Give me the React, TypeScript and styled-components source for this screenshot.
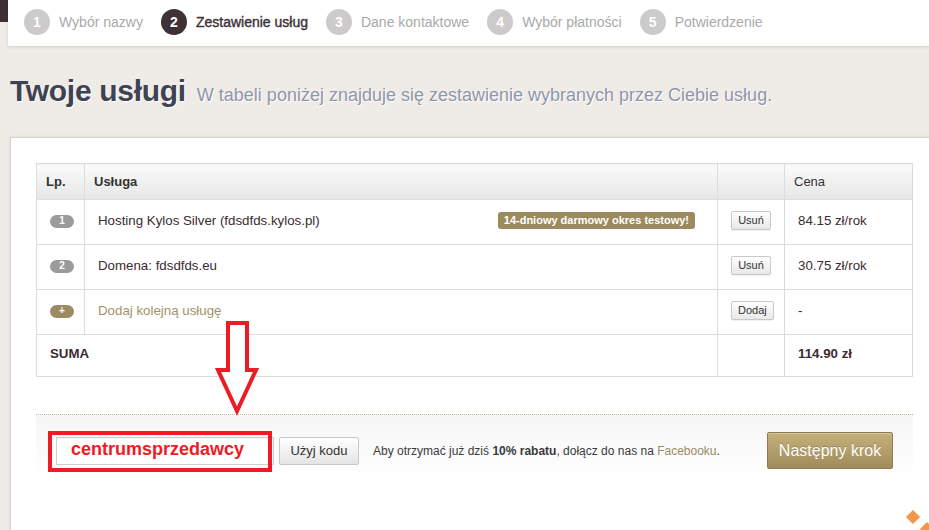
import React from 'react';
import styled, { createGlobalStyle } from 'styled-components';

const GlobalStyle = createGlobalStyle`
  html, body {
    margin: 0;
    padding: 0;
    background: #efebe6;
    overflow: hidden;
    font-family: 'Liberation Sans', Arial, sans-serif;
  }
`;

const Page = styled.div`
  display: flex;
  flex-direction: column;
  min-height: 530px;
  position: relative;
`;

const TopRow = styled.div`
  display: flex;
  align-items: flex-start;
`;

const Strip = styled.div`
  width: 8px;
  height: 22px;
  background: #3f2f37;
`;

const StepBar = styled.div`
  flex: 1;
  height: 46px;
  box-sizing: border-box;
  padding: 0 16px 2px;
  background: #fff;
  display: flex;
  align-items: center;
  gap: 18px;
  box-shadow: 0 1px 3px rgba(0, 0, 0, 0.12);
`;

const Step = styled.div<{ $active?: boolean }>`
  display: flex;
  align-items: center;
  gap: 9px;
  font-size: 14px;
  color: ${(p) => (p.$active ? '#3e3238' : '#a9a9a9')};
  -webkit-text-stroke: ${(p) => (p.$active ? '0.4px #3e3238' : '0')};
`;

const StepNo = styled.span<{ $active?: boolean }>`
  width: 26px;
  height: 26px;
  border-radius: 50%;
  background: ${(p) => (p.$active ? '#3e3238' : '#cccaca')};
  color: #fff;
  font-weight: bold;
  font-size: 14px;
  -webkit-text-stroke: 0;
  display: flex;
  align-items: center;
  justify-content: center;
`;

const Intro = styled.div`
  display: flex;
  align-items: baseline;
  gap: 11px;
  padding: 27px 10px 28px;
`;

const Title = styled.h1`
  margin: 0;
  font-size: 30px;
  line-height: 36px;
  letter-spacing: -0.3px;
  font-weight: bold;
  color: #3e4352;
  text-shadow: 1px 1px 0 #fff;
`;

const Lead = styled.span`
  font-size: 18px;
  color: #8f96a9;
  text-shadow: 1px 1px 0 #fff;
`;

const Panel = styled.div`
  flex: 1;
  margin-left: 10px;
  margin-right: -20px;
  background: #fff;
  border-top: 1px solid #d6d1cc;
  border-left: 1px solid #d6d1cc;
  box-shadow: 0 0 3px rgba(0, 0, 0, 0.08);
  padding: 25px 0 0 25px;
`;

const Table = styled.table`
  width: 877px;
  table-layout: fixed;
  border-collapse: collapse;
  font-size: 13.3px;
  color: #3b2b31;
`;

const Th = styled.th<{ $plain?: boolean }>`
  height: 36px;
  padding: 0 9px;
  text-align: left;
  font-size: 13px;
  font-weight: ${(p) => (p.$plain ? 'normal' : 'bold')};
  color: #333;
  background: linear-gradient(#fbfbfb, #e6e6e6);
  border: 1px solid #dcdcdc;
  box-sizing: border-box;
`;

const Td = styled.td<{ $center?: boolean; $bold?: boolean; $h?: number }>`
  height: ${(p) => p.$h ?? 45}px;
  padding: 0 13px 4px;
  text-align: ${(p) => (p.$center ? 'center' : 'left')};
  font-weight: ${(p) => (p.$bold ? 'bold' : 'normal')};
  border: 1px solid #dcdcdc;
  vertical-align: middle;
  box-sizing: border-box;
`;

const ServiceCell = styled.div`
  display: flex;
  align-items: center;
  justify-content: space-between;
  padding-right: 9px;
`;

const Pill = styled.span<{ $gold?: boolean }>`
  display: inline-flex;
  align-items: center;
  justify-content: center;
  width: 24px;
  height: 13px;
  border-radius: 7px;
  background: ${(p) => (p.$gold ? '#9c8b61' : '#9b9b9b')};
  color: #fff;
  font-size: 10px;
  font-weight: bold;
  line-height: 1;
`;

const Badge = styled.span`
  background: #9b8a5d;
  color: #fff;
  font-size: 11px;
  font-weight: bold;
  padding: 2px 6px 3px;
  border-radius: 3px;
`;

const AddLink = styled.span`
  color: #a39169;
`;

const MiniButton = styled.button`
  font-family: 'Liberation Sans', Arial, sans-serif;
  font-size: 11px;
  color: #333;
  height: 19px;
  padding: 0 6px;
  background: linear-gradient(#ffffff, #e8e8e8);
  border: 1px solid #c8c8c8;
  border-radius: 2px;
  box-shadow: 0 1px 0 rgba(0, 0, 0, 0.05);
`;

const Footer = styled.div`
  position: relative;
  width: 877px;
  box-sizing: border-box;
  margin-top: 37px;
  border-top: 1px dotted #c4b4a0;
  background: linear-gradient(#f6f6f6, #ffffff);
  display: flex;
  align-items: center;
  padding: 17px 20px 12px;
`;

const CodeInput = styled.input`
  width: 218px;
  height: 28px;
  box-sizing: border-box;
  border: 1px solid #cfcfcf;
  box-shadow: inset 0 1px 2px rgba(0, 0, 0, 0.06);
  padding: 0 0 2px 14px;
  font-family: 'Liberation Sans', Arial, sans-serif;
  font-size: 18px;
  font-weight: bold;
  color: #ed1c24;
  outline: none;
`;

const CodeButton = styled.button`
  margin-left: 5px;
  width: 80px;
  height: 28px;
  font-family: 'Liberation Sans', Arial, sans-serif;
  font-size: 13px;
  color: #333;
  background: linear-gradient(#ffffff, #e4e4e4);
  border: 1px solid #c6c6c6;
  border-radius: 2px;
`;

const Promo = styled.p`
  margin: 0 0 0 14px;
  flex: 1;
  font-size: 12px;
  color: #3a3a3a;

  a {
    color: #9a8a62;
    text-decoration: none;
  }
`;

const NextButton = styled.button`
  width: 126px;
  height: 37px;
  font-family: 'Liberation Sans', Arial, sans-serif;
  font-size: 16px;
  color: #fff;
  background: linear-gradient(#c6b17d, #9f8b5b);
  border: 1px solid #8e7b4f;
  border-radius: 2px;
  text-shadow: 0 -1px 0 rgba(0, 0, 0, 0.2);
  box-shadow: inset 0 1px 0 rgba(255, 255, 255, 0.25);
`;

const Highlight = styled.div`
  position: absolute;
  left: 12px;
  top: 16px;
  width: 224px;
  height: 41px;
  box-sizing: border-box;
  border: 4px solid #ed1c24;
  pointer-events: none;
`;

const ArrowMark = styled.svg`
  position: absolute;
  left: 178px;
  top: -95px;
`;

const Diamond = styled.span<{ $x: number; $y: number }>`
  position: absolute;
  left: ${(p) => p.$x}px;
  top: ${(p) => p.$y}px;
  width: 10px;
  height: 10px;
  background: #f4954c;
  transform: rotate(45deg);
`;

const steps = ['Wybór nazwy', 'Zestawienie usług', 'Dane kontaktowe', 'Wybór płatności', 'Potwierdzenie'];

const App: React.FC = () => {
  return (
    <>
      <GlobalStyle />
      <Page>
        <TopRow>
          <Strip />
          <StepBar>
            {steps.map((s, i) => (
              <Step key={s} $active={i === 1}>
                <StepNo $active={i === 1}>{i + 1}</StepNo>
                {s}
              </Step>
            ))}
          </StepBar>
        </TopRow>

        <Intro>
          <Title>Twoje usługi</Title>
          <Lead>W tabeli poniżej znajduje się zestawienie wybranych przez Ciebie usług.</Lead>
        </Intro>

        <Panel>
          <Table>
            <colgroup>
              <col style={{ width: 48 }} />
              <col />
              <col style={{ width: 67 }} />
              <col style={{ width: 128 }} />
            </colgroup>
            <thead>
              <tr>
                <Th>Lp.</Th>
                <Th>Usługa</Th>
                <Th></Th>
                <Th $plain>Cena</Th>
              </tr>
            </thead>
            <tbody>
              <tr>
                <Td $center><Pill>1</Pill></Td>
                <Td>
                  <ServiceCell>
                    <span>Hosting Kylos Silver (fdsdfds.kylos.pl)</span>
                    <Badge>14-dniowy darmowy okres testowy!</Badge>
                  </ServiceCell>
                </Td>
                <Td $center><MiniButton>Usuń</MiniButton></Td>
                <Td>84.15 zł/rok</Td>
              </tr>
              <tr>
                <Td $center><Pill>2</Pill></Td>
                <Td>Domena: fdsdfds.eu</Td>
                <Td $center><MiniButton>Usuń</MiniButton></Td>
                <Td>30.75 zł/rok</Td>
              </tr>
              <tr>
                <Td $center><Pill $gold>+</Pill></Td>
                <Td><AddLink>Dodaj kolejną usługę</AddLink></Td>
                <Td $center><MiniButton>Dodaj</MiniButton></Td>
                <Td>-</Td>
              </tr>
              <tr>
                <Td colSpan={2} $bold $h={42}>SUMA</Td>
                <Td $h={42}></Td>
                <Td $bold $h={42}>114.90 zł</Td>
              </tr>
            </tbody>
          </Table>

          <Footer>
            <CodeInput value="centrumsprzedawcy" readOnly />
            <CodeButton>Użyj kodu</CodeButton>
            <Promo>
              Aby otrzymać już dziś <b>10% rabatu</b>, dołącz do nas na <a href="#">Facebooku</a>.
            </Promo>
            <NextButton>Następny krok</NextButton>
            <Highlight />
            <ArrowMark width="46" height="98" viewBox="0 0 46 98">
              <polygon
                points="14,3 33,3 33,50 42,50 23,91 4,50 14,50"
                fill="#fff"
                stroke="#ed1c24"
                strokeWidth="4"
                strokeLinejoin="miter"
              />
            </ArrowMark>
          </Footer>
        </Panel>

        <Diamond $x={908} $y={512} />
        <Diamond $x={922} $y={524} />
      </Page>
    </>
  );
};

export default App;
